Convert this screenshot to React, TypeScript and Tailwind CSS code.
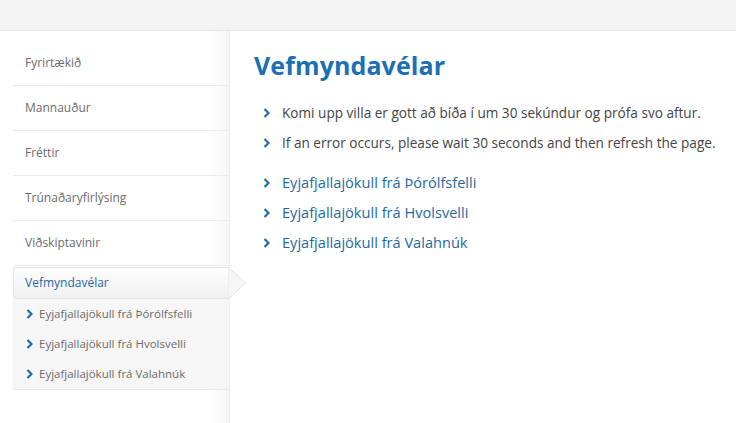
import React from "react";

const menu = ["Fyrirtækið", "Mannauður", "Fréttir", "Trúnaðaryfirlýsing", "Viðskiptavinir"];
const cams = [
  "Eyjafjallajökull frá Þórólfsfelli",
  "Eyjafjallajökull frá Hvolsvelli",
  "Eyjafjallajökull frá Valahnúk",
];

function Chevron({ className }: { className?: string }) {
  return (
    <svg width="7" height="10" viewBox="0 0 7 10" className={className}>
      <polyline points="1.5,1 5.5,5 1.5,9" fill="none" stroke="#1e6cab" strokeWidth="2.2" />
    </svg>
  );
}

export default function App() {
  return (
    <div className="w-[736px] h-[423px] overflow-hidden bg-white" style={{ fontFamily: '"Open Sans", "DejaVu Sans", sans-serif' }}>
      <div className="h-[31px] bg-[#f3f3f3] border-b border-[#e2e2e2]" />
      <div className="flex h-[392px]">
        <aside className="w-[230px] shrink-0 border-r border-[#ececec] bg-[linear-gradient(to_right,#ffffff_92%,#f6f6f6)] pt-[10px] pl-[13px]">
          {menu.map((m) => (
            <div key={m} className="h-[45px] border-b border-[#ececec] flex items-center pl-[12px] text-[12px] text-[#6b6b6b]">
              {m}
            </div>
          ))}
          <div className="relative mt-[1px] h-[32px] border border-[#e3e3e3] border-r-0 rounded-l-[3px] bg-[linear-gradient(#fdfdfd,#f1f1f1)] flex items-center pl-[11px] text-[12px] text-[#1f69a3]">
            Vefmyndavélar
            <svg width="19" height="32" viewBox="0 0 19 32" className="absolute right-[-18px] top-[-1px]">
              <polygon points="0,0.5 1,0.5 17.5,16 1,31.5 0,31.5" fill="#f6f6f6" stroke="#e3e3e3" />
            </svg>
          </div>
          <div className="bg-[#f6f6f6] border-b border-[#e8e8e8]">
            {cams.map((c) => (
              <div key={c} className="h-[30px] flex items-center pl-[13px] gap-[6px] text-[11.5px] text-[#6b6b6b]">
                <Chevron />
                {c}
              </div>
            ))}
          </div>
        </aside>
        <main className="pl-[24px] pt-[17px]">
          <h1 className="text-[25px] font-bold text-[#1c6fb3] leading-[34px] tracking-[0.1px]">Vefmyndavélar</h1>
          <ul className="mt-[16px] text-[13.6px] text-[#444]">
            <li className="h-[30px] flex items-center gap-[12px] pl-[9px]">
              <Chevron />
              Komi upp villa er gott að bíða í um 30 sekúndur og prófa svo aftur.
            </li>
            <li className="h-[30px] flex items-center gap-[12px] pl-[9px]">
              <Chevron />
              If an error occurs, please wait 30 seconds and then refresh the page.
            </li>
          </ul>
          <ul className="mt-[10px] text-[14.6px] text-[#1f69a3]">
            {cams.map((c) => (
              <li key={c} className="h-[30px] flex items-center gap-[12px] pl-[9px]">
                <Chevron />
                {c}
              </li>
            ))}
          </ul>
        </main>
      </div>
    </div>
  );
}
